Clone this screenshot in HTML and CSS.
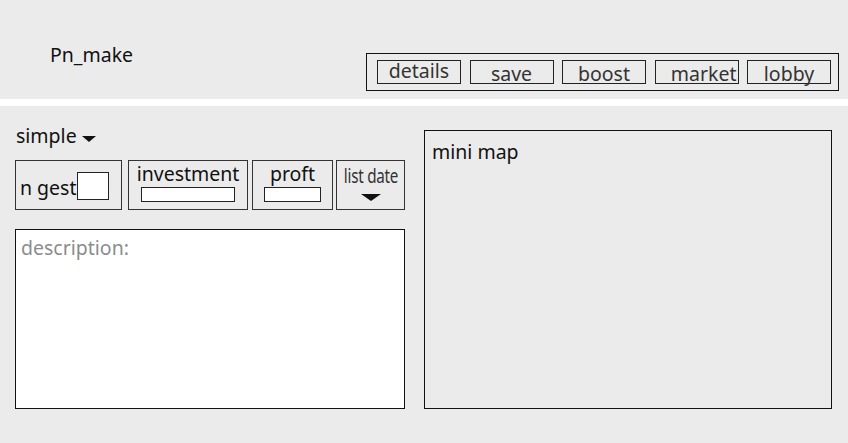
FILE: index.html
```html
<!DOCTYPE html>
<html>
<head>
<meta charset="utf-8">
<link rel="stylesheet" href="styles.css">
</head>
<body>
<header class="top">
  <div class="title">Pn_make</div>
  <nav class="toolbar">
    <div class="tbtn t-high">details</div>
    <div class="tbtn">save</div>
    <div class="tbtn">boost</div>
    <div class="tbtn t-right">market</div>
    <div class="tbtn">lobby</div>
  </nav>
</header>
<main class="main">
  <section class="left">
    <div class="mode">simple <span class="caret"></span></div>
    <div class="fields">
      <div class="field f-gest"><span>n gest</span><div class="sq-input"></div></div>
      <div class="field f-inv"><span class="lbl">investment</span><div class="bar-input"></div></div>
      <div class="field f-prof"><span class="lbl">proft</span><div class="bar-input small"></div></div>
      <div class="field f-date"><span class="cond">list date</span><span class="big-caret"></span></div>
    </div>
    <div class="desc">description:</div>
  </section>
  <section class="map">mini map</section>
</main>
</body>
</html>
```

FILE: styles.css
```css
html, body {
  margin: 0;
  padding: 0;
  background: #ffffff;
  font-family: "Noto Sans", "Open Sans", sans-serif;
  color: #111;
}
.top {
  height: 99px;
  background: #ebebeb;
  display: flex;
  justify-content: space-between;
  align-items: flex-start;
}
.title {
  font-size: 19.5px;
  line-height: 26px;
  margin: 42px 0 0 50px;
}
.toolbar {
  margin: 53px 9px 0 0;
  border: 1px solid #111;
  display: flex;
  gap: 8.5px;
  padding: 6px 7px 6px 10px;
}
.tbtn {
  box-sizing: border-box;
  width: 84px;
  height: 24px;
  border: 1px solid #222;
  font-size: 19.5px;
  line-height: 26px;
  text-align: center;
  color: #333;
  white-space: nowrap;
}
.tbtn.t-high { line-height: 20px; }
.tbtn.t-right { text-align: right; padding-right: 1px; }
.main {
  margin-top: 7px;
  height: 337px;
  background: #ebebeb;
  display: flex;
  padding: 24px 0 0 15px;
  box-sizing: border-box;
}
.left {
  width: 390px;
  display: flex;
  flex-direction: column;
  margin-top: -6px;
}
.mode {
  font-size: 19.5px;
  line-height: 24px;
  height: 24px;
  margin-left: 1px;
  display: flex;
  align-items: center;
  gap: 5px;
}
.caret {
  width: 0;
  height: 0;
  border-left: 7px solid transparent;
  border-right: 7px solid transparent;
  border-top: 6px solid #111;
  margin-top: 5px;
}
.fields {
  display: flex;
  height: 50px;
  margin-top: 12px;
}
.field {
  box-sizing: border-box;
  height: 50px;
  border: 1px solid #333;
  font-size: 19.5px;
  display: flex;
  flex-direction: column;
  align-items: center;
}
.f-gest {
  width: 107px;
  flex-direction: row;
  align-items: flex-end;
  padding: 0 0 9px 4px;
  line-height: 24px;
}
.sq-input {
  width: 32px;
  height: 28px;
  box-sizing: border-box;
  border: 1px solid #222;
  background: #fff;
}
.f-inv { width: 120px; margin-left: 6px; }
.f-prof { width: 81px; margin-left: 4px; }
.f-date { width: 69px; margin-left: 3px; }
.lbl {
  line-height: 22px;
  margin-top: 2px;
}
.bar-input {
  width: 94px;
  height: 15px;
  box-sizing: border-box;
  border: 1px solid #222;
  background: #fff;
  margin-top: 2px;
}
.bar-input.small { width: 57px; }
.cond {
  display: inline-block;
  font-size: 19px;
  line-height: 22px;
  letter-spacing: -0.3px;
  color: #333;
  margin-top: 4px;
  transform: scaleX(0.8);
  white-space: nowrap;
}
.big-caret {
  width: 0;
  height: 0;
  border-left: 10px solid transparent;
  border-right: 10px solid transparent;
  border-top: 7px solid #111;
  margin-top: 7px;
}
.desc {
  box-sizing: border-box;
  margin-top: 19px;
  height: 180px;
  border: 1px solid #111;
  background: #fff;
  color: #8c8c8c;
  font-size: 19.5px;
  line-height: 24px;
  padding: 6px 0 0 5px;
}
.map {
  box-sizing: border-box;
  margin-left: 19px;
  width: 408px;
  height: 279px;
  border: 1px solid #111;
  font-size: 19.5px;
  line-height: 24px;
  padding: 9px 0 0 7px;
}
```
